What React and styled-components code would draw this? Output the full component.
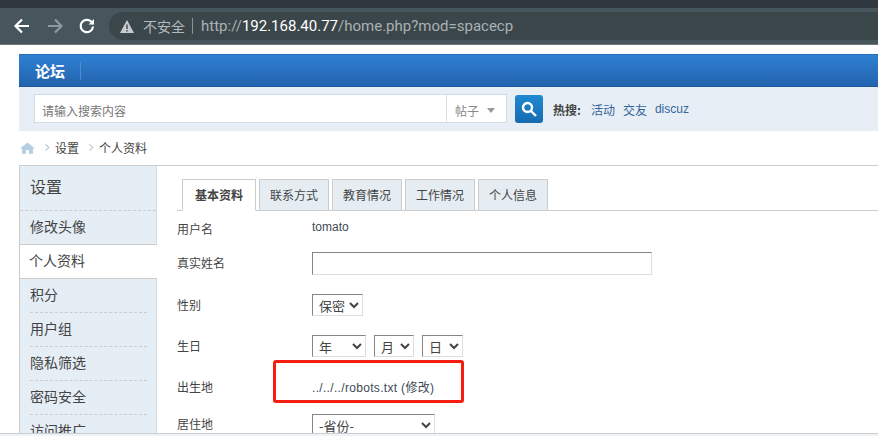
import React from "react";
import styled, { createGlobalStyle } from "styled-components";

const Global = createGlobalStyle`
  html, body { margin: 0; padding: 0; background: #fff; }
  body { font-family: "Liberation Sans", "Noto Sans CJK SC", sans-serif; font-size: 12px; color: #444; }
`;

const Page = styled.div`
  position: relative;
  width: 878px;
  height: 436px;
  overflow: hidden;
  display: flex;
  flex-direction: column;
`;

const TabStrip = styled.div`
  height: 8px;
  background: #2f383e;
`;

const Toolbar = styled.div`
  height: 36px;
  background: #47565d;
  border-bottom: 1px solid #6b777c;
  display: flex;
  align-items: center;
  padding-left: 12px;
`;

const NavIcon = styled.svg`
  width: 20px;
  height: 20px;
  margin-right: ${(p) => p.$gap}px;
  flex: none;
  fill: none;
  stroke: ${(p) => p.$color};
  stroke-width: 2.2;
`;

const Omnibox = styled.div`
  flex: 1;
  height: 28px;
  margin-left: 4px;
  border-radius: 14px 0 0 14px;
  background: #3b464b;
  display: flex;
  align-items: center;
  padding-left: 11px;
`;

const Security = styled.span`
  font: 14px "Noto Sans CJK SC", sans-serif;
  color: #b4babd;
  margin-left: 9px;
  padding-right: 7px;
  border-right: 1px solid #8a9396;
  line-height: 16px;
`;

const Url = styled.span`
  font: 15px Roboto, sans-serif;
  color: #a9b1b4;
  margin-left: 8px;
  b { font-weight: 400; color: #fff; }
`;

const Content = styled.div`
  flex: 1;
  min-height: 0;
  overflow: hidden;
  padding: 9px 0 0 19px;
`;

const NavBar = styled.div`
  height: 33px;
  box-sizing: border-box;
  background: linear-gradient(#2f80d2, #2263ae);
  border-top: 1px solid #2672bd;
  border-bottom: 1px solid #1f5a9c;
  display: flex;
  align-items: center;
  padding-left: 16px;
`;

const NavTitle = styled.span`
  font: bold 15px "Noto Sans CJK SC", sans-serif;
  color: #fff;
  padding-right: 15px;
  border-right: 1px solid #4d8cca;
  line-height: 18px;
`;

const SearchBar = styled.div`
  height: 43px;
  background: #e8eef5;
  display: flex;
  align-items: center;
  padding: 0 0 1px 15px;
`;

const SearchBox = styled.div`
  width: 473px;
  height: 29px;
  box-sizing: border-box;
  background: #fff;
  border: 1px solid #cfdce5;
  display: flex;
  align-items: center;
`;

const SearchHint = styled.span`
  flex: 1;
  padding: 3px 0 0 7px;
  font: 12px "Noto Sans CJK SC", sans-serif;
  color: #777;
`;

const SearchType = styled.span`
  width: 60px;
  height: 100%;
  box-sizing: border-box;
  border-left: 1px solid #d8e2e8;
  padding: 3px 0 0 8px;
  display: flex;
  align-items: center;
  gap: 8px;
  font: 12px "Noto Sans CJK SC", sans-serif;
  color: #888;
`;

const Caret = styled.i`
  width: 0;
  height: 0;
  border: 4px solid transparent;
  border-top: 5px solid #999;
  border-bottom: 0;
`;

const SearchButton = styled.div`
  width: 28px;
  height: 28px;
  margin-left: 8px;
  border-radius: 3px;
  background: linear-gradient(#2089d2, #176bb0);
  display: flex;
  align-items: center;
  justify-content: center;
`;

const HotLabel = styled.b`
  margin-left: 10px;
  margin-right: 10px;
  padding-top: 1px;
  font: bold 12px "Noto Sans CJK SC", sans-serif;
  color: #444;
`;

const HotLink = styled.a`
  margin-right: 8px;
  padding-top: 1px;
  font: 12px "Liberation Sans", "Noto Sans CJK SC", sans-serif;
  color: #369;
`;

const Crumbs = styled.div`
  height: 33px;
  padding: 0 0 1px 1px;
  display: flex;
  align-items: center;
  font: 12px "Noto Sans CJK SC", sans-serif;
  color: #444;
`;

const CrumbSep = styled.span`
  width: 4px;
  height: 4px;
  margin: 0 8px 0 7px;
  border-top: 1px solid #b8c2c9;
  border-right: 1px solid #b8c2c9;
  transform: rotate(45deg) translate(1px, -1px);
`;

const Body = styled.div`
  display: flex;
  border-top: 1px solid #ccc;
`;

const Sidebar = styled.aside`
  width: 138px;
  height: 270px;
  flex: none;
  box-sizing: border-box;
  background: #e5edf5;
  border-left: 1px solid #ccc;
  border-right: 1px solid #d3dee8;
  font: 14px "Noto Sans CJK SC", sans-serif;
  color: #444;
`;

const SideTitle = styled.div`
  height: 45px;
  box-sizing: border-box;
  padding-left: 10px;
  font-size: 16px;
  line-height: 40px;
  border-bottom: 1px dashed #ccc;
`;

const SideItem = styled.div`
  height: 34px;
  box-sizing: border-box;
  margin-left: 10px;
  margin-right: 9px;
  line-height: 31px;
  border-bottom: 1px dashed ${(p) => (p.$plain ? "transparent" : "#ccc")};
`;

const SideActive = styled.div`
  height: 35px;
  box-sizing: border-box;
  margin-right: -1px;
  padding-left: 9px;
  margin-top: -1px;
  background: #fff;
  line-height: 31px;
  border-top: 1px solid #ccc;
  border-bottom: 1px solid #ccc;
`;

const Main = styled.main`
  flex: 1;
  padding-left: 20px;
`;

const Tabs = styled.div`
  margin-top: 13px;
  height: 32px;
  box-sizing: border-box;
  border-bottom: 1px solid #ccc;
  display: flex;
  gap: 3px;
  padding-left: 5px;
`;

const Tab = styled.div`
  width: ${(p) => (p.$active ? 74 : 70)}px;
  height: 32px;
  box-sizing: border-box;
  border: 1px solid #ccc;
  border-bottom: ${(p) => (p.$active ? "1px solid #fff" : "1px solid #ccc")};
  background: ${(p) => (p.$active ? "#fff" : "#e5edf2")};
  font: ${(p) => (p.$active ? "bold" : "normal")} 12px "Noto Sans CJK SC", sans-serif;
  color: #444;
  text-align: center;
  line-height: 30px;
`;

const Row = styled.div`
  height: ${(p) => p.$h}px;
  display: flex;
  align-items: center;
  font: 12px "Noto Sans CJK SC", sans-serif;
  color: #444;
`;

const Label = styled.div`
  width: 135px;
  flex: none;
  padding-bottom: ${(p) => p.$lift || 2}px;
`;

const Value = styled.div`
  display: flex;
  gap: 8px;
  padding-bottom: ${(p) => p.$lift || 0}px;
  font-family: "Liberation Sans", "Noto Sans CJK SC", sans-serif;
  color: #3e4a56;
`;

const TextField = styled.input`
  width: 340px;
  height: 23px;
  box-sizing: border-box;
  margin: 0;
  padding: 0 4px;
  background: #fff;
  border: 1px solid;
  border-color: #858585 #ddd #ddd #858585;
  outline: none;
`;

const Picker = styled.select`
  width: ${(p) => p.$w}px;
  height: 22px;
  box-sizing: border-box;
  margin: 0;
  padding: 0 0 0 2px;
  background: #fff;
  border: 1px solid;
  border-color: #858585 #ddd #ddd #858585;
  border-radius: 0;
  font: 13px "Noto Sans CJK SC", sans-serif;
  color: #444;
`;

const PathText = styled.span`
  letter-spacing: 0.32px;
`;

const Scrollbar = styled.div`
  height: 3px;
  box-sizing: border-box;
  flex: none;
  background: #f0f2f3;
  border-top: 1px solid #c9d0d5;
`;

const Highlight = styled.div`
  position: absolute;
  left: 273px;
  top: 360px;
  width: 191px;
  height: 43px;
  box-sizing: border-box;
  border: 3px solid #f61c10;
  border-radius: 3px;
`;

const rest = ["积分", "用户组", "隐私筛选", "密码安全"];
const tabs = ["联系方式", "教育情况", "工作情况", "个人信息"];

export default function App() {
  return (
    <Page>
      <Global />
      <TabStrip />
      <Toolbar>
        <NavIcon viewBox="0 0 20 20" $gap={13} $color="#fff">
          <path d="M17 10H4M10 3.5 3.5 10l6.500 6.500" />
        </NavIcon>
        <NavIcon viewBox="0 0 20 20" $gap={12} $color="#8f989c">
          <path d="M3 10h13M10 3.500l6.500 6.500L10 16.500" />
        </NavIcon>
        <NavIcon viewBox="0 0 20 20" $gap={8} $color="#fff">
          <path d="M16 10.500A6.200 6.200 0 1 1 14.200 5.600L16.500 8" />
          <path d="M17 3v5.500h-5.500" fill="#fff" stroke="none" />
        </NavIcon>
        <Omnibox>
          <svg width="14" height="13" viewBox="0 0 14 13">
            <path d="M7 0 14 13H0Z" fill="#c6cbcd" />
            <path d="M6.300 4.500h1.400v4.500H6.300zM6.300 10h1.400v1.400H6.300z" fill="#3b464b" />
          </svg>
          <Security>不安全</Security>
          <Url>
            http://<b>192.168.40.77</b>/home.php?mod=spacecp
          </Url>
        </Omnibox>
      </Toolbar>
      <Content>
        <NavBar>
          <NavTitle>论坛</NavTitle>
        </NavBar>
        <SearchBar>
          <SearchBox>
            <SearchHint>请输入搜索内容</SearchHint>
            <SearchType>
              帖子
              <Caret />
            </SearchType>
          </SearchBox>
          <SearchButton>
            <svg width="16" height="16" viewBox="0 0 16 16" fill="none" stroke="#fff" strokeWidth="2.400">
              <circle cx="6.500" cy="6.500" r="4.500" />
              <path d="M10 10l5 5" />
            </svg>
          </SearchButton>
          <HotLabel>热搜:</HotLabel>
          <HotLink>活动</HotLink>
          <HotLink>交友</HotLink>
          <HotLink>discuz</HotLink>
        </SearchBar>
        <Crumbs>
          <svg width="15" height="12" viewBox="0 0 16 12">
            <path d="M8 0 16 6.500h-2.200V12H9.600V8H6.400v4H2.200V6.500H0Z" fill="#b5cfe0" />
          </svg>
          <CrumbSep />
          设置
          <CrumbSep />
          个人资料
        </Crumbs>
        <Body>
          <Sidebar>
            <SideTitle>设置</SideTitle>
            <SideItem $plain>修改头像</SideItem>
            <SideActive>个人资料</SideActive>
            {rest.map((m) => (
              <SideItem key={m}>{m}</SideItem>
            ))}
            <SideItem $plain>访问推广</SideItem>
          </Sidebar>
          <Main>
            <Tabs>
              <Tab $active>基本资料</Tab>
              {tabs.map((t) => (
                <Tab key={t}>{t}</Tab>
              ))}
            </Tabs>
            <Row $h={36}>
              <Label>用户名</Label>
              <Value $lift={5}>tomato</Value>
            </Row>
            <Row $h={33}>
              <Label $lift={3}>真实姓名</Label>
              <Value>
                <TextField />
              </Value>
            </Row>
            <Row $h={50}>
              <Label>性别</Label>
              <Value>
                <Picker $w={51} defaultValue="保密">
                  <option>保密</option>
                </Picker>
              </Value>
            </Row>
            <Row $h={32}>
              <Label>生日</Label>
              <Value>
                <Picker $w={54}>
                  <option>年</option>
                </Picker>
                <Picker $w={40}>
                  <option>月</option>
                </Picker>
                <Picker $w={41}>
                  <option>日</option>
                </Picker>
              </Value>
            </Row>
            <Row $h={52}>
              <Label $lift={3}>出生地</Label>
              <Value $lift={3}>
                <PathText>../../../robots.txt (修改)</PathText>
              </Value>
            </Row>
            <Row $h={22}>
              <Label $lift={3}>居住地</Label>
              <Value>
                <Picker $w={123}>
                  <option>-省份-</option>
                </Picker>
              </Value>
            </Row>
          </Main>
        </Body>
      </Content>
      <Scrollbar />
      <Highlight />
    </Page>
  );
}
